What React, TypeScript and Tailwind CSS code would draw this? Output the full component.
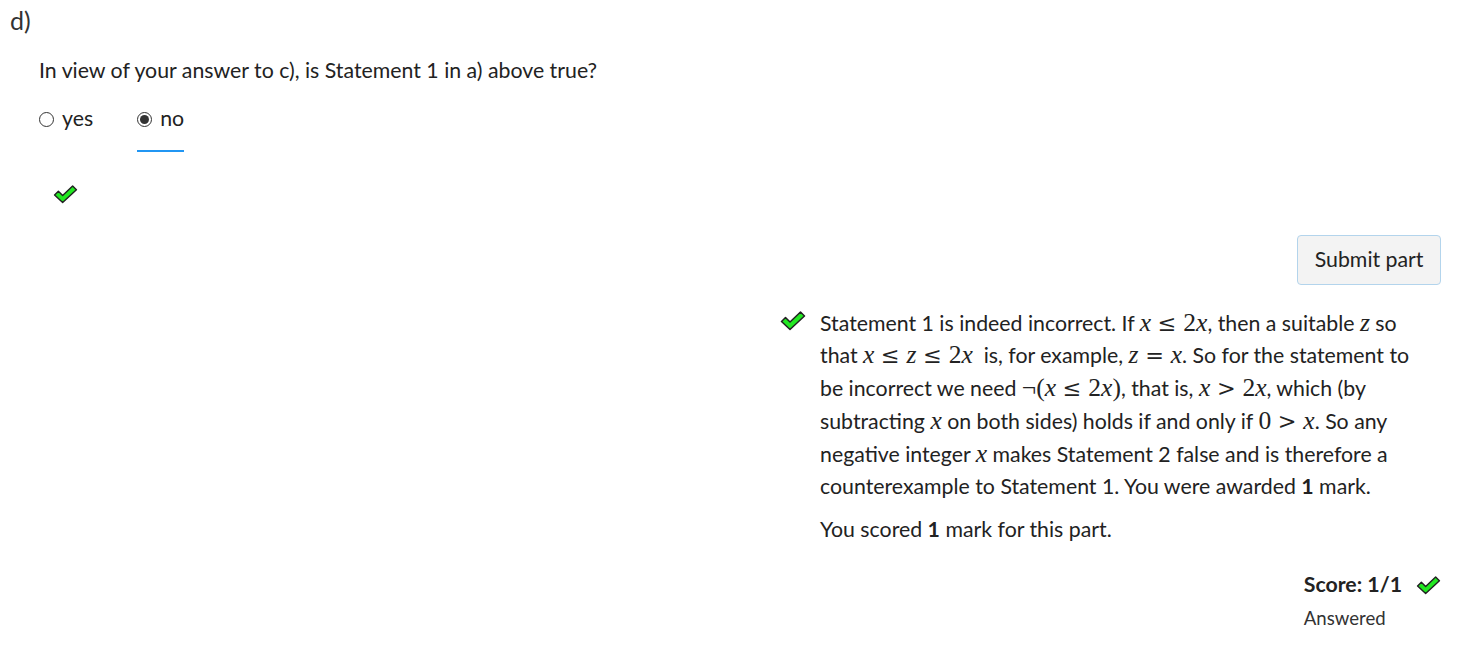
import React from 'react'

const sans = "font-['Lato','Liberation_Sans',sans-serif]"

function Tick({ className = '' }: { className?: string }) {
  return (
    <svg viewBox="0 0 26 20" className={className}>
      <path
        d="M1.5 10.5 L5.5 6.5 L10 11 L20.5 1 L24.5 5 L10 18.5 Z"
        fill="#22e822"
        stroke="#222"
        strokeWidth="1.5"
        strokeLinejoin="round"
      />
    </svg>
  )
}

// inline maths, roughly KaTeX style
function V({ children }: { children: React.ReactNode }) {
  return <span className="font-['Liberation_Serif',serif] italic text-[1.2em] leading-none">{children}</span>
}
function N({ children }: { children: React.ReactNode }) {
  return <span className="font-['Liberation_Serif',serif] text-[1.2em] leading-none">{children}</span>
}
function R({ children }: { children: React.ReactNode }) {
  return <span className="font-['DejaVu_Serif',serif] text-[1.05em] leading-none mx-[0.3em]">{children}</span>
}

function Radio({ checked }: { checked?: boolean }) {
  return (
    <span className="w-[15px] h-[15px] rounded-full border border-[#333] bg-white flex items-center justify-center">
      {checked && <span className="w-[9px] h-[9px] rounded-full bg-[#333]" />}
    </span>
  )
}

export default function App() {
  return (
    <div className={`${sans} bg-white text-[#222] w-[1465px] h-[668px] overflow-hidden relative`}>
      {/* part header */}
      <h3 className="text-[25px] leading-none pl-[10px] pt-[8px] text-[#333]">d)</h3>

      {/* prompt */}
      <div className="pl-[39px]">
        <p className="text-[21.3px] mt-[22px] leading-[30px]">In view of your answer to c), is Statement 1 in a) above true?</p>

        <div className="flex gap-[44px] mt-[19px] text-[21.3px]">
          <label className="flex items-center gap-[8px] h-[30px]">
            <Radio />
            <span>yes</span>
          </label>
          <div className="flex flex-col">
            <label className="flex items-center gap-[8px] h-[30px]">
              <Radio checked />
              <span>no</span>
            </label>
            <div className="h-[1.5px] bg-[#2196f3] mt-[16px]" />
          </div>
        </div>

        <Tick className="w-[25px] h-[19px] ml-[14px] mt-[33px]" />
      </div>

      {/* submit */}
      <div className="flex justify-end pr-[24px] mt-[31px]">
        <button className="px-[16.5px] h-[50px] text-[21.3px] bg-[#f3f3f3] border border-[#b3d4ec] rounded-[4px] text-[#222]">
          Submit part
        </button>
      </div>

      {/* feedback */}
      <div className="flex justify-end pr-[20px] mt-[22px]">
        <div className="w-[665px] flex gap-[14px] text-[21.3px]">
          <Tick className="w-[26px] h-[20px] mt-[4px] shrink-0" />
          <div className="leading-[32.8px]">
            <div>Statement 1 is indeed incorrect. If <V>x</V><R>≤</R><N>2</N><V>x</V>, then a suitable <V>z</V> so</div>
            <div>that <V>x</V><R>≤</R><V>z</V><R>≤</R><N>2</N><V>x</V>&nbsp; is, for example, <V>z</V><R>=</R><V>x</V>. So for the statement to</div>
            <div>be incorrect we need <N>¬(</N><V>x</V><R>≤</R><N>2</N><V>x</V><N>)</N>, that is, <V>x</V><R>&gt;</R><N>2</N><V>x</V>, which (by</div>
            <div>subtracting <V>x</V> on both sides) holds if and only if <N>0</N><R>&gt;</R><V>x</V>. So any</div>
            <div>negative integer <V>x</V> makes Statement 2 false and is therefore a</div>
            <div>counterexample to Statement 1. You were awarded <b>1</b> mark.</div>
            <div className="mt-[10px]">You scored <b>1</b> mark for this part.</div>
          </div>
        </div>
      </div>

      {/* score */}
      <div className="flex justify-end pr-[24px] mt-[24px]">
        <div className="flex flex-col items-start">
          <div className="flex items-center gap-[14px] h-[30px]">
            <span className="text-[21.3px] font-bold">Score: 1/1</span>
            <Tick className="w-[25px] h-[19px]" />
          </div>
          <div className="text-[18.6px] text-[#333] mt-[5px]">Answered</div>
        </div>
      </div>
    </div>
  )
}
